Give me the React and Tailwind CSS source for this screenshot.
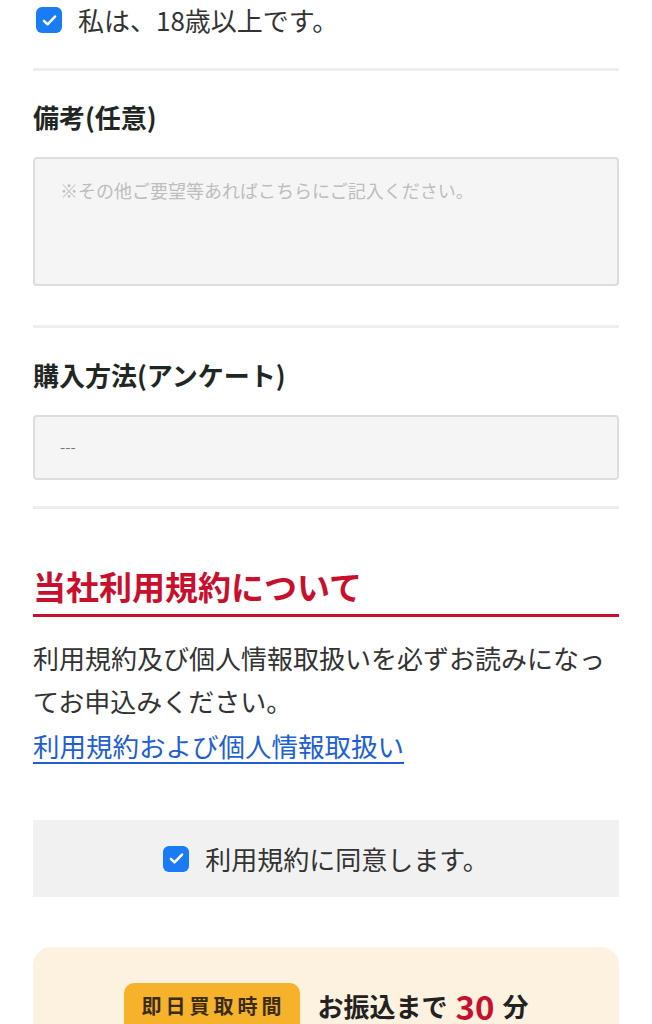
import React from "react";

function Check({ className = "" }) {
  return (
    <span
      className={
        "flex h-[26px] w-[26px] shrink-0 items-center justify-center rounded-[6px] bg-[#1a7cf5] " +
        className
      }
    >
      <svg width="19" height="19" viewBox="0 0 24 24" fill="none">
        <path
          d="M5 12.5l4.5 4.5L19 7"
          stroke="white"
          strokeWidth="3.2"
          strokeLinecap="round"
          strokeLinejoin="round"
        />
      </svg>
    </span>
  );
}

export default function App() {
  return (
    <div
      className="h-[1024px] w-[652px] overflow-hidden bg-white px-[33px] text-[#2a2a2a]"
      style={{ fontFamily: '"Noto Sans CJK JP", "Noto Sans", sans-serif' }}
    >
      {/* 18+ checkbox */}
      <div className="flex h-[40px] items-center gap-[16px] pl-[3px]">
        <Check />
        <span className="text-[26px] leading-[40px] text-[#333]">私は、18歳以上です。</span>
      </div>

      <div className="mt-[28px] h-[3px] bg-[#eeeeee]" />

      {/* 備考 */}
      <h2 className="mt-[28px] text-[26px] font-bold leading-[36px] text-[#1f2623]">備考(任意)</h2>
      <textarea
        className="mt-[22px] block h-[129px] w-full resize-none rounded-[4px] border-2 border-[#dddddd] bg-[#f5f5f5] px-[25px] pt-[18px] text-[18px] leading-[26px] text-[#333] outline-none placeholder:text-[#bdbdbd]"
        placeholder="※その他ご要望等あればこちらにご記入ください。"
      />

      <div className="mt-[39px] h-[3px] bg-[#eeeeee]" />

      {/* 購入方法 */}
      <h2 className="mt-[29px] text-[26px] font-bold leading-[36px] text-[#1f2623]">購入方法(アンケート)</h2>
      <div className="mt-[22px] flex h-[65px] items-center rounded-[4px] border-2 border-[#dddddd] bg-[#f5f5f5] px-[25px] text-[15px] text-[#777]">
        ---
      </div>

      <div className="mt-[26px] h-[3px] bg-[#eeeeee]" />

      {/* 規約 */}
      <h2 className="mt-[55px] border-b-[3px] border-[#c8102e] pb-[6px] text-[33px] font-bold leading-[44px] text-[#c8102e]">
        当社利用規約について
      </h2>
      <p className="mt-[19px] text-[26px] leading-[43px] text-[#333]">
        利用規約及び個人情報取扱いを必ずお読みになってお申込みください。
      </p>
      <a
        href="#"
        className="block text-[26.5px] leading-[48px] text-[#1e5fd1] underline decoration-[2px] underline-offset-[5px]"
      >
        利用規約および個人情報取扱い
      </a>

      {/* agree box */}
      <div className="mt-[50px] flex h-[77px] items-center justify-center gap-[16px] bg-[#f1f1f1]">
        <Check />
        <span className="text-[26px] leading-[40px] text-[#333]">利用規約に同意します。</span>
      </div>

      {/* cream box */}
      <div className="mt-[50px] rounded-t-[18px] bg-[#fdf2df] pt-[36px]">
        <div className="flex h-[41px] items-start justify-center gap-[18px]">
          <span className="flex h-[41px] items-center rounded-t-[10px] bg-[#f6b22a] pl-[18px] pr-[14px] pt-[4px] text-[20px] font-bold leading-[30px] tracking-[4px] text-[#3a2c12]">
            即日買取時間
          </span>
          <span className="flex h-[41px] items-center gap-[8px] pt-[4px] text-[26px] font-bold leading-[34px] text-[#222]">
            <span>お振込まで</span>
            <span className="text-[33px] leading-[34px] text-[#c8102e]">30</span>
            <span>分</span>
          </span>
        </div>
      </div>
    </div>
  );
}
